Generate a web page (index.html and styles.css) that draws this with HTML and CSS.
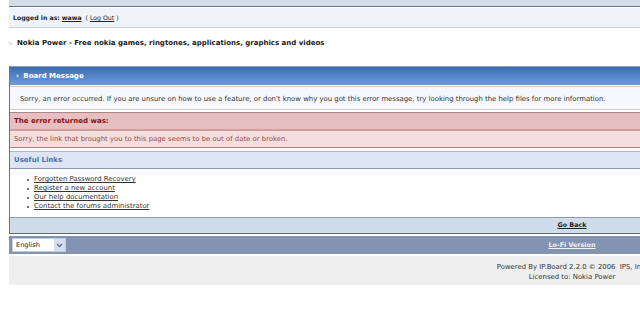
FILE: index.html
```html
<!DOCTYPE html>
<html>
<head>
<meta charset="utf-8">
<link rel="stylesheet" href="styles.css">
</head>
<body>
<div class="page">
  <div class="topbar"></div>
  <div class="userbar">
    <b>Logged in as:</b> <a class="uname" href="#">wawa</a> &nbsp;( <a href="#">Log Out</a> )
  </div>
  <div class="title">
    <span class="tarrow">&#9655;</span>
    <span class="ttext">Nokia Power - Free nokia games, ringtones, applications, graphics and videos</span>
  </div>
  <div class="board">
    <div class="bhead"><span class="bchev">&#8250;</span> Board Message</div>
    <div class="bmsg">Sorry, an error occurred. If you are unsure on how to use a feature, or don't know why you got this error message, try looking through the help files for more information.</div>
    <div class="errbox">
      <div class="errhead">The error returned was:</div>
      <div class="errbody">Sorry, the link that brought you to this page seems to be out of date or broken.</div>
    </div>
    <div class="ulhead">Useful Links</div>
    <ul class="links">
      <li><a href="#">Forgotten Password Recovery</a></li>
      <li><a href="#">Register a new account</a></li>
      <li><a href="#">Our help documentation</a></li>
      <li><a href="#">Contact the forums administrator</a></li>
    </ul>
    <div class="goback"><span class="rcell"><a href="#">Go Back</a></span></div>
  </div>
  <div class="footbar">
    <div class="select"><span class="seltext">English</span><span class="selbtn"><svg width="7" height="5" viewBox="0 0 7 5"><path d="M1 1 L3.5 3.5 L6 1" stroke="#5a6f92" stroke-width="1.3" fill="none"/></svg></span></div>
    <span class="rcell"><a href="#" class="lofi">Lo-Fi Version</a></span>
  </div>
  <div class="copy">
    <div class="rcell2">Powered By IP.Board 2.2.0 &copy; 2006 &nbsp;IPS, Inc.<br>Licensed to: Nokia Power</div>
  </div>
</div>
</body>
</html>
```
FILE: styles.css
```css
html, body {
  margin: 0;
  padding: 0;
  background: #ffffff;
  overflow: hidden;
  width: 640px;
  height: 315px;
}
.page {
  width: 700px;
  font-family: "DejaVu Sans", Verdana, sans-serif;
  font-size: 6.9px;
  color: #222;
}
a { color: #222; }
.topbar {
  height: 6px;
  margin-left: 9px;
  background: #d3dcea;
  border-bottom: 1px solid #6d7684;
}
.userbar {
  margin: 1px 0 0 9px;
  height: 19px;
  line-height: 19px;
  padding-left: 4px;
  background: #f0f4f9;
  border-bottom: 1px solid #c9d4e2;
  color: #222;
  font-size: 6.2px;
}
.userbar b { font-weight: bold; }
.uname { font-weight: bold; }
.title {
  display: flex;
  align-items: center;
  margin: 8px 0 0 9px;
  height: 14px;
}
.tarrow {
  font-size: 5px;
  color: #8a8f99;
  width: 8px;
}
.ttext {
  font-weight: bold;
  font-size: 7px;
  color: #1a1a1a;
}
.board {
  margin: 16px 0 0 9px;
  border-left: 1px solid #6b7380;
}
.bhead {
  height: 18px;
  line-height: 18px;
  border-top: 1px solid #8fa0b8;
  background: linear-gradient(#3e6cb4, #6d9bd9);
  color: #fff;
  font-weight: bold;
  font-size: 7px;
  padding-left: 6px;
}
.bchev { margin-right: 2px; }
.bmsg {
  margin-top: 1px;
  height: 22px;
  line-height: 24px;
  padding-left: 10px;
  background: #f6f8fb;
  border-top: 1px solid #dcc9c9;
  border-bottom: 1px solid #dcc9c9;
  color: #333;
}
.errbox {
  margin-top: 2px;
  border-top: 1px solid #b08586;
  border-bottom: 1px solid #b08586;
}
.errhead {
  height: 16px;
  line-height: 17px;
  padding-left: 4px;
  background: #e6c0c1;
  border-bottom: 2px solid #cc9d9e;
  color: #8a0c10;
  font-weight: bold;
  font-size: 7px;
}
.errbody {
  height: 16px;
  line-height: 17px;
  padding-left: 4px;
  background: #f3dede;
  color: #a0484a;
}
.ulhead {
  margin-top: 3px;
  height: 16px;
  line-height: 17px;
  padding-left: 4px;
  background: #dde4f4;
  border-top: 1px solid #a9bdd2;
  border-bottom: 1px solid #8b9ab3;
  color: #4a72aa;
  font-weight: bold;
  font-size: 7px;
}
.links {
  margin: 0;
  padding: 6px 0 6px 24px;
  list-style: none;
  background: #fff;
}
.links li {
  height: 9px;
  line-height: 9px;
  position: relative;
}
.links li::before {
  content: "";
  position: absolute;
  left: -7px;
  top: 4px;
  width: 2px;
  height: 2px;
  background: #444;
  border-radius: 1px;
}
.links a { color: #333; }
.goback {
  display: flex;
  justify-content: flex-end;
  height: 15px;
  line-height: 15px;
  background: #d1dcea;
  border-top: 1px solid #8b9cb4;
  border-bottom: 1px solid #5e6672;
}
.rcell {
  width: 256px;
  text-align: center;
  font-weight: bold;
  font-size: 6.4px;
}
.goback a { color: #222; }
.footbar {
  margin: 2px 0 0 9px;
  height: 18px;
  background: #8394b2;
  display: flex;
  align-items: center;
  justify-content: space-between;
}
.lofi { color: #eef2f8; }
.select {
  margin-left: 3px;
  width: 54px;
  height: 14px;
  background: #fff;
  border: 1px solid #c4ccd8;
  display: flex;
  align-items: center;
  justify-content: space-between;
  box-sizing: border-box;
  font-size: 6.6px;
}
.seltext {
  padding-left: 3px;
  color: #222;
}
.selbtn {
  width: 11px;
  height: 12px;
  background: #d5def0;
  display: flex;
  align-items: center;
  justify-content: center;
}
.copy {
  margin: 2px 0 0 9px;
  height: 29px;
  background: #eeeeee;
  display: flex;
  justify-content: flex-end;
  align-items: center;
  padding-top: 2px;
  box-sizing: border-box;
}
.rcell2 {
  width: 256px;
  text-align: center;
  line-height: 10px;
  color: #333;
}
```
